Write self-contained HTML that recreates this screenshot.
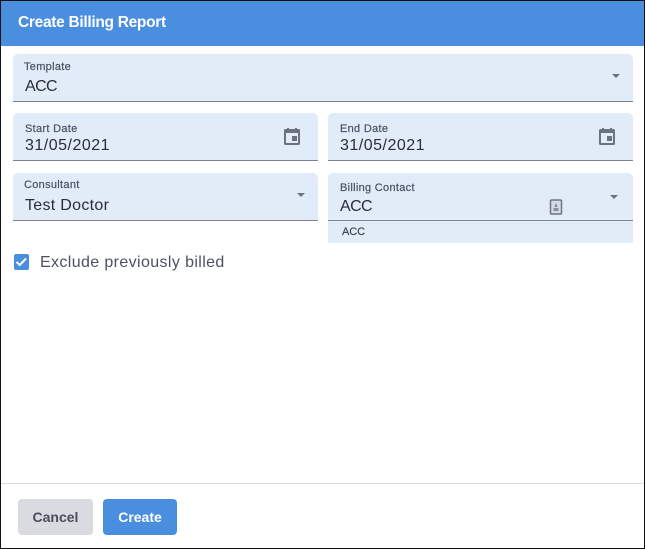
<!DOCTYPE html>
<html>
<head>
<meta charset="utf-8">
<style>
html,body{margin:0;padding:0;background:#fff}
body{width:645px;height:549px;position:relative;overflow:hidden;font-family:"Liberation Sans",sans-serif}
.frame{position:absolute;left:0;top:0;width:643px;height:547px;border:1px solid #111;z-index:5;pointer-events:none}
.hdr{position:absolute;left:1px;top:1px;width:643px;height:45px;background:#4a8ee0}
.t{position:absolute;white-space:nowrap;line-height:1}
.title{left:18px;top:15px;font-size:15.5px;font-weight:bold;color:#fff;letter-spacing:-.3px}
.f{position:absolute;background:#e2ecf9;border-radius:5px 5px 0 0;box-sizing:border-box}
.u{position:absolute;height:1px;background:#7d8490}
.lab{font-size:11px;color:#4b5163;letter-spacing:.3px;-webkit-text-stroke:.2px #4b5163}
.val{font-size:16px;color:#2a2d36}
.date{letter-spacing:.5px}
.arrow{position:absolute;width:0;height:0;border-left:4.5px solid transparent;border-right:4.5px solid transparent;border-top:4px solid #6d7280}
svg{position:absolute}
.btn{position:absolute;top:499px;height:36px;border-radius:4px;font-size:14px;font-weight:bold;text-align:center;line-height:36px}
</style>
</head>
<body>
<div class="hdr"></div>
<div class="t title">Create Billing Report</div>

<div class="f" style="left:13px;top:54px;width:620px;height:47px"></div>
<div class="u" style="left:13px;top:101px;width:620px"></div>
<div class="t lab" style="left:24px;top:62px">Template</div>
<div class="t val" style="left:25px;top:79px;letter-spacing:-.6px">ACC</div>
<div class="arrow" style="left:612px;top:74px"></div>

<div class="f" style="left:13px;top:113px;width:305px;height:47px"></div>
<div class="u" style="left:13px;top:160px;width:305px"></div>
<div class="t lab" style="left:25px;top:124px">Start Date</div>
<div class="t val date" style="left:25px;top:138px">31/05/2021</div>
<svg style="left:281px;top:125px" width="22" height="22" viewBox="0 0 22 22"><path fill="#6d7280" fill-rule="evenodd" d="M4.500 4H6V3H8V4H14V3H16V4H17.500A1.500 1.500 0 0 1 19 5.500V18.500A1.500 1.500 0 0 1 17.500 20H4.500A1.500 1.500 0 0 1 3 18.500V5.500A1.500 1.500 0 0 1 4.500 4ZM5 8V18H17V8ZM11 11H16V16H11Z"/></svg>

<div class="f" style="left:328px;top:113px;width:305px;height:47px"></div>
<div class="u" style="left:328px;top:160px;width:305px"></div>
<div class="t lab" style="left:340px;top:124px">End Date</div>
<div class="t val date" style="left:340px;top:138px">31/05/2021</div>
<svg style="left:596px;top:125px" width="22" height="22" viewBox="0 0 22 22"><path fill="#6d7280" fill-rule="evenodd" d="M4.500 4H6V3H8V4H14V3H16V4H17.500A1.500 1.500 0 0 1 19 5.500V18.500A1.500 1.500 0 0 1 17.500 20H4.500A1.500 1.500 0 0 1 3 18.500V5.500A1.500 1.500 0 0 1 4.500 4ZM5 8V18H17V8ZM11 11H16V16H11Z"/></svg>

<div class="f" style="left:13px;top:173px;width:305px;height:47px"></div>
<div class="u" style="left:13px;top:220px;width:305px"></div>
<div class="t lab" style="left:24px;top:180px">Consultant</div>
<div class="t val" style="left:25px;top:198px;letter-spacing:.3px">Test Doctor</div>
<div class="arrow" style="left:297px;top:193px"></div>

<div class="f" style="left:328px;top:173px;width:305px;height:70px"></div>
<div class="u" style="left:328px;top:220px;width:305px"></div>
<div class="t lab" style="left:340px;top:183px">Billing Contact</div>
<div class="t val" style="left:340px;top:199px;letter-spacing:-.6px">ACC</div>
<svg style="left:549px;top:199px" width="14" height="16" viewBox="0 0 14 16"><rect x="1.500" y="1" width="11" height="14" rx="1" fill="#d3dbe6" stroke="#6f7580" stroke-width="1.500"/><path d="M7 4L8.500 8H5.500Z" fill="#7d838e"/><rect x="4.500" y="9" width="5" height="3" fill="#8b909a"/></svg>
<div class="arrow" style="left:610px;top:195px"></div>
<div class="t" style="left:342px;top:227px;font-size:11px;color:#3a3e4a;letter-spacing:-.1px;-webkit-text-stroke:.15px #3a3e4a">ACC</div>

<div style="position:absolute;left:14px;top:254px;width:15px;height:16px;background:#4a8ee0;border-radius:2px"></div>
<svg style="left:13px;top:254px" width="16" height="16" viewBox="0 0 16 16"><path d="M3.500 8L6.800 11L13 4.500" fill="none" stroke="#fff" stroke-width="2"/></svg>
<div class="t" style="left:40px;top:255px;font-size:16px;color:#4b5163;letter-spacing:.38px">Exclude previously billed</div>

<div style="position:absolute;left:1px;top:483px;width:643px;height:1px;background:#dcdcdf"></div>
<div class="btn" style="left:18px;width:75px;background:#dadbe0;color:#4b4e58">Cancel</div>
<div class="btn" style="left:103px;width:74px;background:#4a8ee0;color:#fff">Create</div>

<div class="frame"></div>
</body>
</html>
